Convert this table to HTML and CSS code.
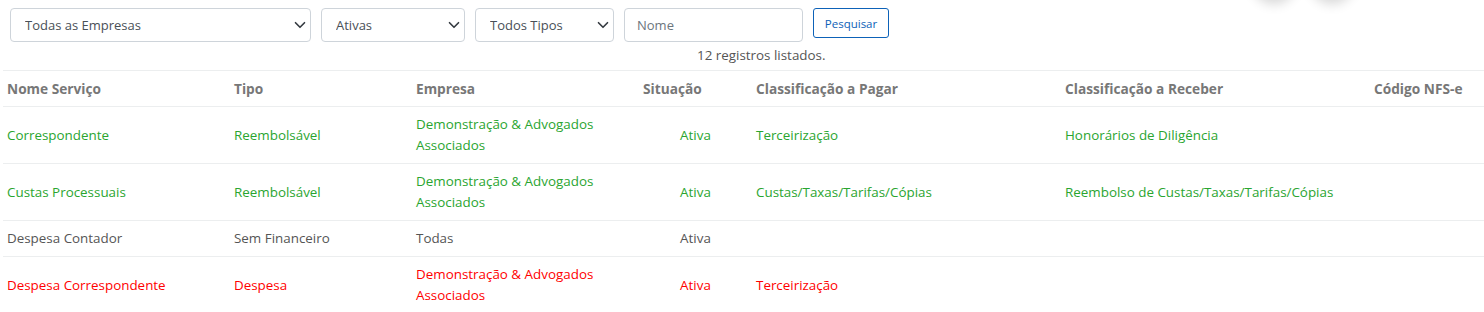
FILE: index.html
```html
<!DOCTYPE html>
<html lang="pt-BR">
<head>
<meta charset="utf-8">
<title>Serviços</title>
<link rel="stylesheet" href="styles.css">
</head>
<body>
<div class="fab-shadows">
  <span class="fab"></span>
  <span class="fab"></span>
</div>
<form class="filters">
  <div class="select-wrap w-empresa">
    <select class="form-select"><option>Todas as Empresas</option></select>
    <svg class="chev" viewBox="0 0 16 16" width="12" height="12"><path d="m2 5 6 6 6-6" fill="none" stroke="#343a40" stroke-width="2.2" stroke-linecap="round" stroke-linejoin="round"/></svg>
  </div>
  <div class="select-wrap w-situacao">
    <select class="form-select"><option>Ativas</option></select>
    <svg class="chev" viewBox="0 0 16 16" width="12" height="12"><path d="m2 5 6 6 6-6" fill="none" stroke="#343a40" stroke-width="2.2" stroke-linecap="round" stroke-linejoin="round"/></svg>
  </div>
  <div class="select-wrap w-tipo">
    <select class="form-select"><option>Todos Tipos</option></select>
    <svg class="chev" viewBox="0 0 16 16" width="12" height="12"><path d="m2 5 6 6 6-6" fill="none" stroke="#343a40" stroke-width="2.2" stroke-linecap="round" stroke-linejoin="round"/></svg>
  </div>
  <input class="form-input" type="text" placeholder="Nome">
  <button class="btn-outline" type="button">Pesquisar</button>
</form>
<div class="count">12 registros listados.</div>
<table class="grid">
  <colgroup>
    <col class="c-nome"><col class="c-tipo"><col class="c-emp"><col class="c-sit"><col class="c-pag"><col class="c-rec"><col class="c-cod">
  </colgroup>
  <thead>
    <tr>
      <th>Nome Serviço</th><th>Tipo</th><th>Empresa</th><th>Situação</th><th>Classificação a Pagar</th><th>Classificação a Receber</th><th>Código NFS-e</th>
    </tr>
  </thead>
  <tbody>
    <tr class="ok">
      <td>Correspondente</td><td>Reembolsável</td><td>Demonstração &amp; Advogados Associados</td><td class="center">Ativa</td><td>Terceirização</td><td>Honorários de Diligência</td><td></td>
    </tr>
    <tr class="ok">
      <td>Custas Processuais</td><td>Reembolsável</td><td>Demonstração &amp; Advogados Associados</td><td class="center">Ativa</td><td>Custas/Taxas/Tarifas/Cópias</td><td>Reembolso de Custas/Taxas/Tarifas/Cópias</td><td></td>
    </tr>
    <tr class="neutral">
      <td>Despesa Contador</td><td>Sem Financeiro</td><td>Todas</td><td class="center">Ativa</td><td></td><td></td><td></td>
    </tr>
    <tr class="bad">
      <td>Despesa Correspondente</td><td>Despesa</td><td>Demonstração &amp; Advogados Associados</td><td class="center">Ativa</td><td>Terceirização</td><td></td><td></td>
    </tr>
  </tbody>
</table>
</body>
</html>
```
FILE: styles.css
```css
html, body {
  margin: 0;
  padding: 0;
  background: #fff;
  overflow: hidden;
}
body {
  font-family: "Open Sans", "Noto Sans", sans-serif;
  font-size: 13.4px;
  color: #555;
}
.fab-shadows {
  position: absolute;
  top: -46px;
  left: 1252px;
  display: flex;
  gap: 14px;
}
.fab {
  display: block;
  width: 44px;
  height: 44px;
  border-radius: 50%;
  background: #fff;
  box-shadow: 0 6px 12px rgba(0, 0, 0, 0.16);
}
.filters {
  display: flex;
  gap: 10px;
  padding: 8px 0 0 10px;
  align-items: flex-start;
}
.select-wrap {
  display: grid;
  height: 34px;
}
.select-wrap > * {
  grid-area: 1 / 1;
}
.w-empresa { width: 301px; }
.w-situacao { width: 144px; }
.w-tipo { width: 139px; }
.form-select {
  appearance: none;
  -webkit-appearance: none;
  height: 34px;
  width: 100%;
  box-sizing: border-box;
  border: 1px solid #ced4da;
  border-radius: 4px;
  background: #fff;
  padding: 0 28px 0 14px;
  font-family: inherit;
  font-size: 13px;
  color: #495057;
  margin: 0;
}
.chev {
  justify-self: end;
  align-self: center;
  margin-right: 5px;
  pointer-events: none;
}
.form-input {
  width: 179px;
  height: 34px;
  box-sizing: border-box;
  border: 1px solid #ced4da;
  border-radius: 4px;
  padding: 0 12px;
  font-family: inherit;
  font-size: 13px;
  color: #495057;
  margin: 0;
}
.form-input::placeholder {
  color: #6c757d;
}
.btn-outline {
  height: 30px;
  width: 76px;
  box-sizing: border-box;
  border: 1px solid #0d62b8;
  border-radius: 3px;
  background: #fff;
  color: #0d62b8;
  font-family: inherit;
  font-size: 11.5px;
  padding: 0;
  margin: 0;
}
.count {
  margin: 3px 0 0 697px;
  height: 20px;
  line-height: 20px;
  color: #555;
}
.grid {
  margin: 5px 0 0 3px;
  width: 1481px;
  border-collapse: collapse;
  table-layout: fixed;
}
.c-nome { width: 227px; }
.c-tipo { width: 182px; }
.c-emp { width: 227px; }
.c-sit { width: 113px; }
.c-pag { width: 309px; }
.c-rec { width: 309px; }
.c-cod { width: 114px; }
.grid th,
.grid td {
  padding: 7px 4px 7px 4px;
  line-height: 21px;
  border-top: 1px solid #eceeef;
  text-align: left;
  vertical-align: middle;
}
.grid th {
  font-weight: 700;
  font-size: 13.7px;
  color: #777;
}
.grid td.center {
  text-align: center;
}
.ok td { color: #2aa530; }
.neutral td { color: #555; }
.bad td { color: #ff0000; }
```
